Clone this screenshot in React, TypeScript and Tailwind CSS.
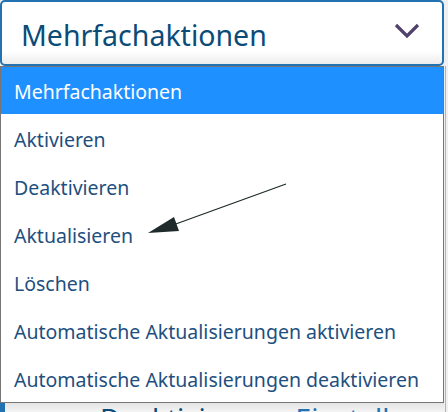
import React from "react";

const items = [
  "Aktivieren",
  "Deaktivieren",
  "Aktualisieren",
  "Löschen",
  "Automatische Aktualisierungen aktivieren",
  "Automatische Aktualisierungen deaktivieren",
];

export default function App() {
  return (
    <div
      className="relative w-[448px] h-[412px] overflow-hidden bg-[#f0f0f1]"
      style={{ fontFamily: '"Noto Sans", "Open Sans", sans-serif' }}
    >
      <div className="flex flex-col w-[444px]">
        {/* select box */}
        <div className="h-[66px] border-2 border-[#2271b1] rounded-[5px] bg-gradient-to-b from-white from-80% to-[#ececec] flex items-center justify-between pl-[19px] pr-[22px]">
          <span className="text-[28.5px] text-[#0a4b78] leading-none pt-[5px]">Mehrfachaktionen</span>
          <svg width="26" height="16" viewBox="0 0 26 16" className="mb-[4px]">
            <path d="M2 2 L13 13 L24 2" fill="none" stroke="#50426c" strokeWidth="3.2" />
          </svg>
        </div>
        {/* list */}
        <div className="relative border border-[#767676] bg-white flex flex-col">
          <div className="h-[47px] bg-[#1e90ff] text-white text-[19.5px] flex items-center pl-[13px] pt-[2px]">
            Mehrfachaktionen
          </div>
          {items.map((t) => (
            <div key={t} className="h-[48px] text-[#1e4f7e] text-[19.5px] flex items-center pl-[13px] pt-[3px]">
              {t}
            </div>
          ))}
          <svg className="absolute left-0 top-0" width="444" height="336" viewBox="0 66 444 336">
            <line x1="285" y1="183" x2="172" y2="224" stroke="#1f2a2a" strokeWidth="1.3" />
            <polygon points="147,232 173,216 178,230" fill="#1f2a2a" />
          </svg>
        </div>
      </div>
      {/* background page strip */}
      <div className="flex items-start h-[10px] bg-gradient-to-b from-[#e4e4e4] to-[#f6f6f6] border-l-[5px] border-[#2271b1] w-[444px]">
        <span className="ml-[95px] text-[28px] leading-[26px] text-[#0a4b78] mt-[2px]">Deaktivieren</span>
        <span className="ml-[20px] mt-[2px] w-px h-[10px] bg-[#c3c4c7]" />
        <span className="ml-[10px] text-[28px] leading-[26px] text-[#2271b1] mt-[2px]">Einstellungen</span>
      </div>
      <div className="absolute right-[2px] top-[66px] w-px h-[346px] bg-[#b4b4b4]" />
    </div>
  );
}
